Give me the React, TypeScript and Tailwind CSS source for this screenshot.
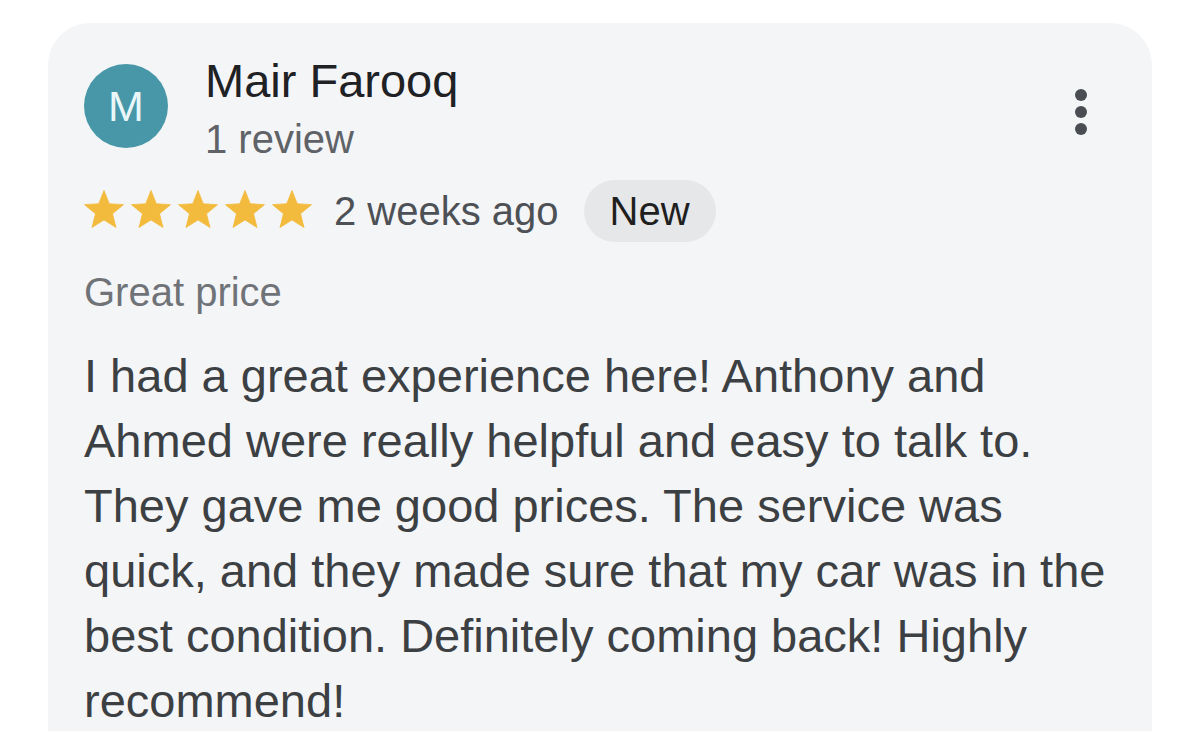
const Star = () => (
  <svg width="40" height="38" viewBox="-0.5 -0.5 41 39" className="shrink-0">
    <path
      d="M20 0L25.41 13.59L40 14.53L28.75 23.87L32.36 38.04L20 30.23L7.64 38.04L11.25 23.87L0 14.53L14.59 13.59Z"
      fill="#f3bb3d"
      stroke="#f3bb3d"
      strokeWidth="0.8"
      strokeLinejoin="round"
    />
  </svg>
);

const ReviewCard = () => {
  return (
    <div className="ml-[48px] mr-[48px] mt-[23px] rounded-t-[42px] bg-[#f4f5f7] pl-[36px] pr-[36px] pt-[30px] pb-[40px]">
      {/*Header*/}
      <div className="flex items-start">
        <div className="mt-[11px] flex h-[84px] w-[84px] shrink-0 items-center justify-center rounded-full bg-[#4797a9] text-[43px] text-[#e9f7f9]">
          M
        </div>
        <div className="ml-[37px] flex flex-col">
          <span className="text-[47px] leading-[56px] text-[#202124]">
            Mair Farooq
          </span>
          <span className="mt-[6px] text-[40px] leading-[48px] text-[#5f6368]">
            1 review
          </span>
        </div>
        <div className="ml-auto mr-[29px] mt-[36px] flex flex-col gap-[5px]">
          <div className="h-[12px] w-[12px] rounded-full bg-[#4a4d52]" />
          <div className="h-[12px] w-[12px] rounded-full bg-[#4a4d52]" />
          <div className="h-[12px] w-[12px] rounded-full bg-[#4a4d52]" />
        </div>
      </div>

      {/*Rating*/}
      <div className="mt-[17px] flex items-center">
        <div className="-mt-[4px] flex gap-[7px]">
          <Star />
          <Star />
          <Star />
          <Star />
          <Star />
        </div>
        <span className="ml-[22px] text-[40px] leading-[48px] text-[#4d5156]">
          2 weeks ago
        </span>
        <span className="ml-[25px] flex h-[62px] items-center rounded-full bg-[#e6e7e9] px-[26px] text-[40px] text-[#1f1f1f]">
          New
        </span>
      </div>

      {/*Body*/}
      <p className="mt-[26px] text-[40px] leading-[48px] text-[#6f7378]">
        Great price
      </p>
      <p className="mt-[27px] text-[47px] leading-[65px] text-[#3c4043]">
        I had a great experience here! Anthony and Ahmed were really helpful
        and easy to talk to. They gave me good prices. The service was quick,
        and they made sure that my car was in the best condition. Definitely
        coming back! Highly recommend!
      </p>
    </div>
  );
};

export default function App() {
  return (
    <div
      className="h-[731px] overflow-hidden bg-white"
      style={{ fontFamily: '"Liberation Sans", Arial, sans-serif' }}
    >
      <ReviewCard />
    </div>
  );
}
